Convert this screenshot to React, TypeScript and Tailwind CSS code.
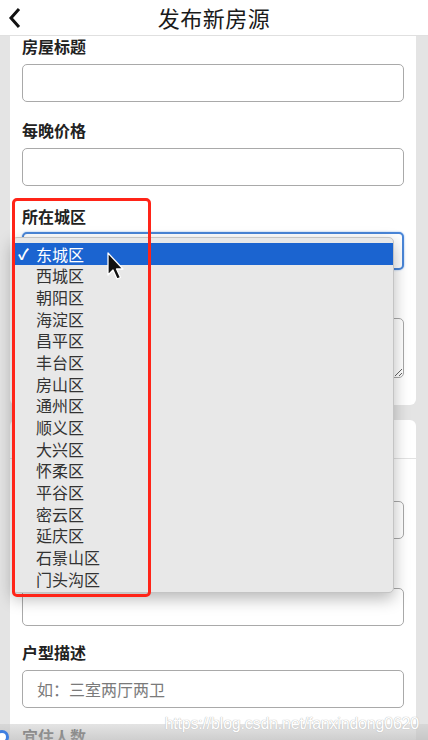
import React from "react";

const districts = [
  "东城区",
  "西城区",
  "朝阳区",
  "海淀区",
  "昌平区",
  "丰台区",
  "房山区",
  "通州区",
  "顺义区",
  "大兴区",
  "怀柔区",
  "平谷区",
  "密云区",
  "延庆区",
  "石景山区",
  "门头沟区",
];

const font = { fontFamily: '"Noto Sans CJK SC", "Noto Sans", sans-serif' };

// labels hidden under the open menu are left blank, the rows keep their height
function Label({ text }: { text: string }) {
  return (
    <div className="h-4 text-[16px] leading-4 font-bold text-[#222]">{text}</div>
  );
}

function Field({
  label,
  placeholder,
  className = "",
}: {
  label: string;
  placeholder?: string;
  className?: string;
}) {
  return (
    <div className={"flex flex-col gap-[10px] " + className}>
      <Label text={label} />
      <input
        placeholder={placeholder}
        className="h-[38px] w-full rounded-[5px] border border-[#a9a9a9] bg-white px-[14px] text-[16px] text-[#333] placeholder:text-[#7a7a7a] outline-none"
        style={font}
      />
    </div>
  );
}

export default function App() {
  return (
    <div className="relative h-[740px] w-[428px] overflow-hidden bg-[#e4e4e4]" style={font}>
      <div className="relative flex h-[36px] items-center justify-center border-b border-[#e0e0e0] bg-white">
        <svg className="absolute left-[8px] top-[7px]" width="14" height="22" viewBox="0 0 14 22">
          <polyline points="11,2 3,11 11,20" fill="none" stroke="#111" strokeWidth="3" />
        </svg>
        <span className="text-[22px] text-[#1a1a1a] tracking-[0.5px]">发布新房源</span>
      </div>

      <div className="flex flex-col gap-[15px] pl-[10px] pr-[12px]">
        <div className="flex flex-col rounded-b-md bg-white px-[12px] pt-[2px] pb-[27px]">
          <Field label="房屋标题" />
          <Field label="每晚价格" className="mt-[20px]" />
          <div className="mt-[22px] flex flex-col gap-[8px]">
            <Label text="所在城区" />
            <div className="h-[38px] w-full rounded-[5px] border-2 border-[#4a86d8] bg-white shadow-[0_0_2px_#8ab4ea]" />
          </div>
          <div className="mt-[24px] flex flex-col gap-[8px]">
            <Label text="" />
            <textarea className="h-[60px] w-full rounded-[5px] border border-[#a9a9a9] bg-white outline-none" />
          </div>
        </div>

        <div className="flex flex-col rounded-md bg-white">
          <div className="h-[39px] border-b border-[#e2e2e2]" />
          <div className="flex flex-col px-[12px] pt-[16px]">
            <Field label="" />
            <Field label="" className="mt-[23px]" />
            <Field label="户型描述" placeholder="如：三室两厅两卫" className="mt-[18px]" />
            <div className="mt-[20px]">
              <Label text="宜住人数" />
            </div>
          </div>
        </div>
      </div>

      <div className="pointer-events-none absolute bottom-0 left-0 h-[16px] w-full bg-gradient-to-b from-[rgba(205,205,205,0.55)] to-[rgba(190,190,190,0.75)]" />
      <div className="absolute left-[-5px] top-[730px] h-[14px] w-[14px] rounded-full border-[3px] border-[#3f7fe0] bg-white" />
      <div
        className="absolute right-[9px] top-[712px] text-[16px] tracking-[-0.2px] text-white [text-shadow:0_0_1px_#bdbdbd,0_0_1px_#bdbdbd]"
        style={{ fontFamily: '"Liberation Sans", sans-serif' }}
      >
        https://blog.csdn.net/fanxindong0620
      </div>

      <div className="absolute left-[12px] top-[237px] h-[356px] w-[382px] rounded-[5px] border border-[#c4c4c4] bg-[#e8e8e8] pt-[5px] shadow-[0_6px_16px_rgba(0,0,0,0.28)]">
        {districts.map((d, i) => (
          <div
            key={d}
            className={
              i === 0
                ? "flex h-[21.67px] items-center bg-[#1b64d0] text-white"
                : "flex h-[21.67px] items-center text-[#333]"
            }
          >
            <span className="w-[23px] pl-[5px] text-[15px] font-bold">{i === 0 ? "✓" : ""}</span>
            <span className="text-[16px] leading-none">{d}</span>
          </div>
        ))}
      </div>

      <div className="pointer-events-none absolute left-[12px] top-[198px] h-[399px] w-[139px] rounded-[5px] border-[3px] border-[#ff2418]" />

      <svg className="absolute left-[106px] top-[252px]" width="20" height="30" viewBox="0 0 20 30">
        <path
          d="M2 1 L2 23 L7 18 L11 27 L14.5 25.5 L10.5 17 L17 17 Z"
          fill="#111"
          stroke="#fff"
          strokeWidth="1.3"
          strokeLinejoin="round"
        />
      </svg>
    </div>
  );
}
